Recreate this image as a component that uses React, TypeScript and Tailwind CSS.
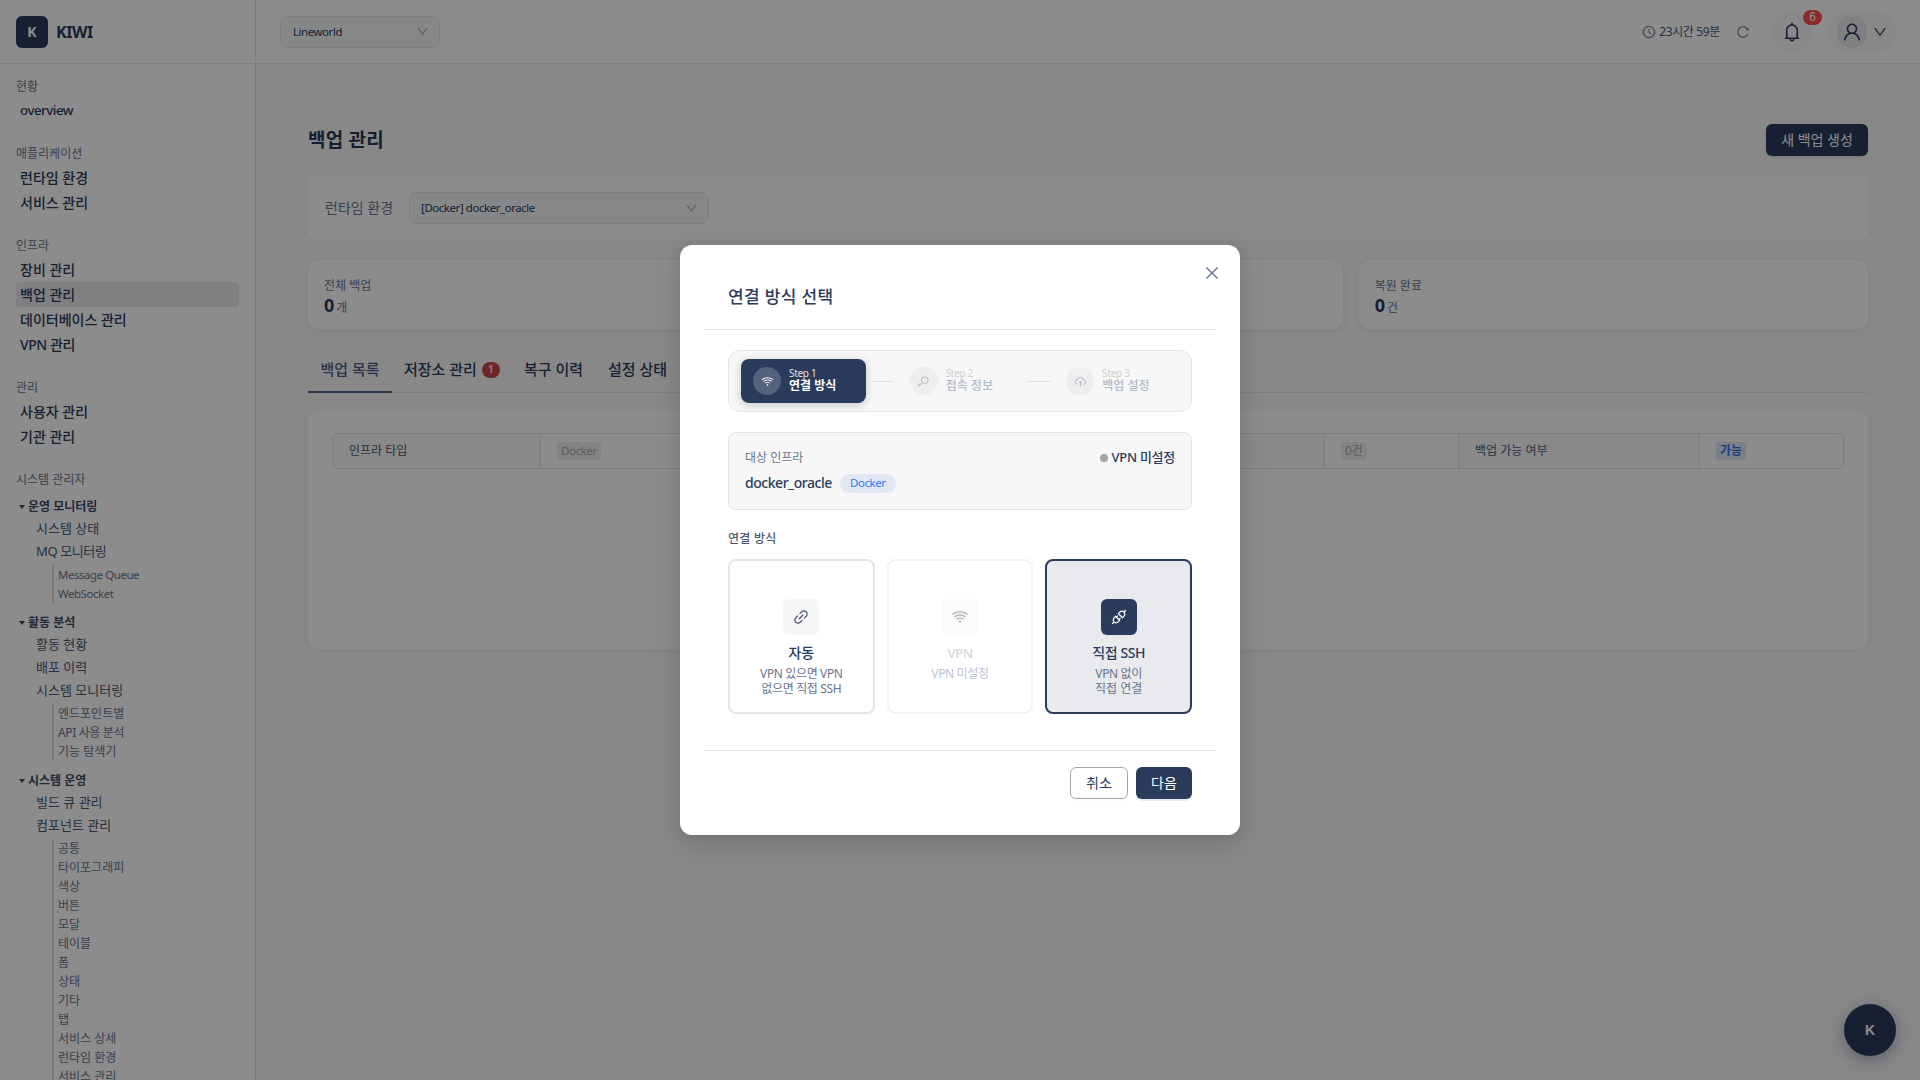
import React from "react";
import {
  AiOutlineApi,
  AiOutlineBell,
  AiOutlineClockCircle,
  AiOutlineClose,
  AiOutlineCloudUpload,
  AiOutlineDown,
  AiOutlineKey,
  AiOutlineLink,
  AiOutlineReload,
  AiOutlineUser,
  AiOutlineWifi,
} from "react-icons/ai";

type Sub = { label: string; children?: string[] };
type Group = { label: string; items: Sub[] };

const sections = [
  { title: "현황", items: ["overview"] },
  { title: "애플리케이션", items: ["런타임 환경", "서비스 관리"] },
  { title: "인프라", items: ["장비 관리", "백업 관리", "데이터베이스 관리", "VPN 관리"] },
  { title: "관리", items: ["사용자 관리", "기관 관리"] },
];

const groups: Group[] = [
  {
    label: "운영 모니터링",
    items: [{ label: "시스템 상태" }, { label: "MQ 모니터링", children: ["Message Queue", "WebSocket"] }],
  },
  {
    label: "활동 분석",
    items: [
      { label: "활동 현황" },
      { label: "배포 이력" },
      { label: "시스템 모니터링", children: ["엔드포인트별", "API 사용 분석", "기능 탐색기"] },
    ],
  },
  {
    label: "시스템 운영",
    items: [
      { label: "빌드 큐 관리" },
      {
        label: "컴포넌트 관리",
        children: ["공통", "타이포그래피", "색상", "버튼", "모달", "테이블", "폼", "상태", "기타", "탭", "서비스 상세", "런타임 환경", "서비스 관리"],
      },
    ],
  },
];

/** Sets Latin text tighter than the Hangul around it. */
function tight(text: string) {
  const latin = /[A-Za-z]/.test(text);
  const hangul = /[가-힣]/.test(text);
  if (!latin) return <span className="whitespace-pre">{text}</span>;
  return <span className={`whitespace-pre ${hangul ? "tracking-[-0.03em]" : "text-[0.95em] tracking-[-0.035em]"}`}>{text}</span>;
}

function Sidebar() {
  return (
    <aside className="flex h-full w-64 shrink-0 flex-col border-r border-[#e5e5e5] bg-white">
      <div className="flex h-16 shrink-0 items-center gap-2 border-b border-[#e5e5e5] px-4">
        <div className="flex size-8 items-center justify-center rounded-md bg-[#2b3b5b] text-sm font-bold text-white">K</div>
        <span className="text-base font-bold tracking-[-0.03em]">KIWI</span>
      </div>
      <nav className="min-h-0 flex-1 overflow-hidden px-4 pt-[11px]">
        {sections.map((s) => (
          <div key={s.title} className="mb-[19px]">
            <div className="flex h-[23px] items-center pt-px text-xs text-[#68758f]">{s.title}</div>
            {s.items.map((item) => (
              <div
                key={item}
                className={`flex h-[25px] items-center rounded px-1 text-sm font-medium ${item === "백업 관리" ? "bg-[#e9eaee]" : ""}`}
              >
                {tight(item)}
              </div>
            ))}
          </div>
        ))}
        <div className="mb-[3px] flex h-[23px] items-center pt-px text-xs text-[#68758f]">시스템 관리자</div>
        {groups.map((g) => (
          <div key={g.label} className="mb-[7px]">
            <div className="flex h-6 items-center gap-[3px] pt-0.5 pl-[3px] text-xs font-semibold text-[#3d4b68]">
              <svg width="6" height="4" viewBox="0 0 6 4" fill="currentColor">
                <path d="M0 0h6L3 4z" />
              </svg>
              {g.label}
            </div>
            {g.items.map((it) => (
              <div key={it.label}>
                <div className="flex h-[23px] items-center pb-px pl-5 text-[13px] text-[#4a5874]">{tight(it.label)}</div>
                {it.children && (
                  <div className="mt-px ml-9 border-l-2 border-[#e0e0e0] pl-1">
                    {it.children.map((c) => (
                      <div key={c} className="flex h-[19px] items-center pt-px text-xs text-[#68758f]">
                        {tight(c)}
                      </div>
                    ))}
                  </div>
                )}
              </div>
            ))}
          </div>
        ))}
      </nav>
    </aside>
  );
}

function Header() {
  return (
    <header className="flex h-16 shrink-0 items-center justify-between border-b border-[#e5e5e5] bg-white px-6">
      <div className="flex h-8 w-40 items-center justify-between rounded-lg border border-[#e3e5e8] bg-[#f5f6f8] pr-[10px] pl-3 text-xs">
        {tight("Lineworld")}
        <AiOutlineDown className="size-[13px] text-[#a6a6a6]" />
      </div>
      <div className="flex items-center">
        <AiOutlineClockCircle className="size-3.5 text-[#68758f]" />
        <span className="ml-[3px] text-xs tracking-[-0.03em] text-[#4a5874]">23시간 59분</span>
        <AiOutlineReload className="ml-4 size-3.5 text-[#68758f]" />
        <div className="relative ml-[22px] flex size-10 items-center justify-center rounded-full bg-[#f7f7f7]">
          <AiOutlineBell className="size-[22px]" />
          <span className="absolute -top-0.5 left-[31px] flex h-[15px] w-[19px] items-center justify-center rounded-full bg-[#ff4d4f] font-['Liberation_Sans',sans-serif] text-xs text-white">
            6
          </span>
        </div>
        <div className="ml-4 flex h-10 w-[68px] items-center gap-1 rounded-full bg-[#f7f7f7] pl-2">
          <div className="flex size-8 items-center justify-center rounded-full bg-[#e9eaee]">
            <AiOutlineUser className="size-[22px]" />
          </div>
          <AiOutlineDown className="size-4" />
        </div>
      </div>
    </header>
  );
}

function Stat({ label, value, unit }: { label: string; value: string; unit: string }) {
  return (
    <div className="h-[69px] rounded-xl bg-white px-4 pt-[17px] shadow-[0_2px_8px_rgba(0,0,0,0.06)]">
      <div className="text-xs leading-[18px] text-[#68758f]">{label}</div>
      <div className="flex items-baseline gap-0.5 leading-5">
        <span className="text-lg leading-5 font-bold">{value}</span>
        <span className="text-xs leading-5 text-[#68758f]">{unit}</span>
      </div>
    </div>
  );
}

function Content() {
  return (
    <main className="flex-1 bg-[#f7f7f7] px-[52px] pt-[60px]">
      <div className="flex h-8 items-center justify-between">
        <h1 className="text-[19px] font-semibold tracking-[0.01em]">백업 관리</h1>
        <button className="h-8 w-[102px] rounded-md bg-[#2b3b5b] text-sm text-white shadow-sm">새 백업 생성</button>
      </div>
      <div className="mt-5 flex h-16 items-center gap-4 rounded-lg bg-white px-[17px] shadow-[0_1px_2px_rgba(0,0,0,0.03)]">
        <span className="text-sm text-[#68758f]">런타임 환경</span>
        <div className="flex h-8 w-[300px] items-center justify-between rounded-lg border border-[#e3e5e8] bg-[#f5f6f8] pr-[10px] pl-[11px] text-xs">
          {tight("[Docker] docker_oracle")}
          <AiOutlineDown className="size-[13px] text-[#a6a6a6]" />
        </div>
      </div>
      <div className="mt-5 grid grid-cols-3 gap-4">
        <Stat label="전체 백업" value="0" unit="개" />
        <Stat label="백업 완료" value="0" unit="개" />
        <Stat label="복원 완료" value="0" unit="건" />
      </div>
      <div className="mt-4 flex h-12 border-b border-[#e3e3e3] text-[15px] font-medium">
        <div className="-mb-px flex w-[84px] items-center justify-center border-b-2 border-[#4a5f86] pt-0.5 text-[#4a5f86]">백업 목록</div>
        <div className="flex items-center pt-px pl-3">
          저장소 관리
          <span className="mt-px ml-[5px] flex h-4 w-[18px] items-center justify-center rounded-full bg-[#c9464a] text-[11px] text-white">1</span>
        </div>
        <div className="flex items-center pt-px pl-6">복구 이력</div>
        <div className="flex items-center pt-px pl-[25px]">설정 상태</div>
      </div>
      <div className="mt-4 h-60 rounded-xl bg-white px-6 pt-6 shadow-[0_2px_8px_rgba(0,0,0,0.04)]">
        <div className="grid h-9 grid-cols-[208px_380px_404px_134px_241px_1fr] overflow-hidden rounded-md border border-[#e2e2e2] text-xs text-[#4a5874] *:flex *:items-center *:border-r *:border-[#e2e2e2] *:px-4">
          <div className="bg-[#f9f9f9]">인프라 타입</div>
          <div>
            <span className="flex h-[18px] w-11 items-center justify-center rounded bg-[#eeeeee] text-[#a6a6a6]">{tight("Docker")}</span>
          </div>
          <div className="bg-[#f9f9f9]">백업 수</div>
          <div>
            <span className="flex h-[18px] items-center rounded bg-[#eeeeee] px-1 text-[#a6a6a6]">0건</span>
          </div>
          <div className="bg-[#f9f9f9]">백업 가능 여부</div>
          <div className="border-r-0!">
            <span className="flex h-[18px] items-center rounded bg-[#e1e8f5] px-1 font-semibold text-[#2f6fe8]">가능</span>
          </div>
        </div>
      </div>
    </main>
  );
}

function Step({ n, label, icon, active }: { n: number; label: string; icon: React.ReactNode; active?: boolean }) {
  return (
    <div className={`flex h-11 w-[125px] items-center gap-2 rounded-lg pl-3 ${active ? "bg-[#2b3b5b] text-white shadow-[0_2px_8px_rgba(0,0,0,0.2)]" : "text-[#b3bbc9]"}`}>
      <span className={`flex size-7 items-center justify-center rounded-full ${active ? "bg-white/20" : "bg-[#eeeeee]"}`}>{icon}</span>
      <div className="-mt-[3px]">
        <div className={`text-[10px] leading-[13px] tracking-[-0.03em] ${active ? "text-white/85" : "text-[#cfcfcf]"}`}>Step {n}</div>
        <div className={`text-xs leading-3 ${active ? "font-bold" : "font-medium"}`}>{label}</div>
      </div>
    </div>
  );
}

type Mode = "normal" | "disabled" | "selected";

const boxStyles: Record<Mode, string> = {
  normal: "border-[#e5e5e5] bg-white",
  disabled: "border-[#e5e5e5] bg-white opacity-45",
  selected: "border-[#2b3b5b] bg-[#e9eaee]",
};

function Method({ icon, title, lines, mode }: { icon: React.ReactNode; title: string; lines: string[]; mode: Mode }) {
  return (
    <div className={`flex h-[155px] flex-col items-center rounded-lg border-2 pt-[38px] ${boxStyles[mode]}`}>
      <div className={`flex size-9 items-center justify-center rounded-md ${mode === "selected" ? "bg-[#2b3b5b] text-white" : "bg-[#f7f7f7] text-[#4a5874]"}`}>
        {icon}
      </div>
      <div className={`mt-2 text-sm leading-5 font-medium ${mode === "disabled" ? "text-[#a6a6a6]" : ""}`}>{tight(title)}</div>
      <div className="mt-[3px] text-center text-xs leading-[15px] text-[#68758f]">
        {lines.map((l) => (
          <div key={l}>{tight(l)}</div>
        ))}
      </div>
    </div>
  );
}

function Modal() {
  return (
    <div className="relative h-[590px] w-[560px] rounded-xl bg-white px-6 pt-6 shadow-[0_6px_16px_rgba(0,0,0,0.08),0_3px_6px_-4px_rgba(0,0,0,0.12),0_9px_28px_8px_rgba(0,0,0,0.05)]">
      <AiOutlineClose className="absolute top-[19px] right-[19px] size-[18px] text-[#68758f]" />
      <div className="flex h-[61px] items-center border-b border-[#e5e5e5] px-6 pb-[5px] text-[17px] font-medium tracking-[0.02em]">
        연결 방식 선택
      </div>
      <div className="px-6 pt-5">
        <div className="flex h-[62px] items-center rounded-xl border border-[#e5e5e5] bg-[#f7f7f7] px-3">
          <Step n={1} label="연결 방식" active icon={<AiOutlineWifi className="size-[13px]" />} />
          <div className="mx-1 h-px w-6 bg-[#e0e0e0]" />
          <Step n={2} label="접속 정보" icon={<AiOutlineKey className="size-[13px]" />} />
          <div className="mx-1 h-px w-6 bg-[#e0e0e0]" />
          <Step n={3} label="백업 설정" icon={<AiOutlineCloudUpload className="size-[13px]" />} />
        </div>
        <div className="mt-5 flex h-[78px] justify-between rounded-lg border border-[#e5e5e5] bg-[#f7f7f7] px-4 pt-4">
          <div>
            <div className="text-xs leading-[18px] text-[#68758f]">대상 인프라</div>
            <div className="mt-1.5 flex items-center gap-2">
              <span className="text-sm font-medium tracking-[-0.033em]">docker_oracle</span>
              <span className="flex h-[19px] w-14 items-center justify-center rounded-full bg-[#e1e8f5] text-xs text-[#2f74f0]">{tight("Docker")}</span>
            </div>
          </div>
          <div className="flex h-[18px] items-center gap-1 text-[13px] font-medium tracking-[-0.02em]">
            <span className="size-2 rounded-full bg-[#a6a6a6]" />
            VPN 미설정
          </div>
        </div>
        <div className="mt-5 text-xs leading-[18px] font-medium tracking-[0.02em] text-[#4a5874]">연결 방식</div>
        <div className="mt-[11px] grid grid-cols-3 gap-3">
          <Method mode="normal" icon={<AiOutlineLink className="size-[18px]" />} title="자동" lines={["VPN 있으면 VPN", "없으면 직접 SSH"]} />
          <Method mode="disabled" icon={<AiOutlineWifi className="size-[18px]" />} title="VPN" lines={["VPN 미설정"]} />
          <Method mode="selected" icon={<AiOutlineApi className="size-[18px]" />} title="직접 SSH" lines={["VPN 없이", "직접 연결"]} />
        </div>
      </div>
      <div className="mt-9 flex justify-end gap-2 border-t border-[#e5e5e5] px-6 pt-4">
        <button className="h-8 w-[58px] rounded-md border border-[#a6a6a6] bg-white text-sm shadow-[0_2px_0_rgba(0,0,0,0.02)]">취소</button>
        <button className="h-8 w-14 rounded-md bg-[#2b3b5b] text-sm text-white shadow-[0_2px_0_#e9ebf2]">다음</button>
      </div>
    </div>
  );
}

export default function App() {
  return (
    <div className="relative h-screen w-screen overflow-hidden font-['Noto_Sans','Noto_Sans_CJK_KR',sans-serif] text-[#2b3b5b]">
      <div className="flex h-full">
        <Sidebar />
        <div className="flex h-full flex-1 flex-col">
          <Header />
          <Content />
        </div>
      </div>
      <div className="absolute right-6 bottom-6 flex size-[52px] items-center justify-center rounded-full bg-[#2b3b5b] font-['Liberation_Sans',sans-serif] text-sm font-bold text-white shadow-[0_4px_16px_rgba(43,59,91,0.4)]">
        K
      </div>
      <div className="absolute inset-0 flex items-center justify-center bg-black/45">
        <Modal />
      </div>
    </div>
  );
}
